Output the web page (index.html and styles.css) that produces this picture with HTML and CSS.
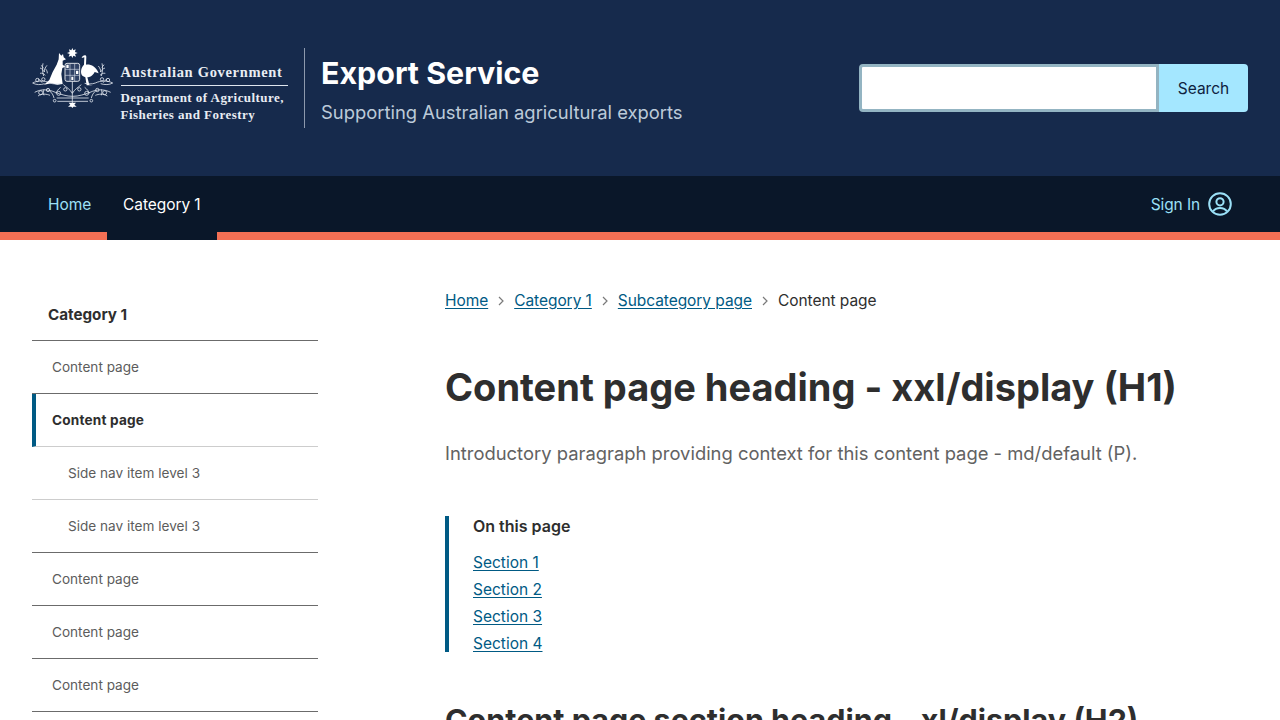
FILE: index.html
```html
<!DOCTYPE html>
<html lang="en">
<head>
<meta charset="utf-8">
<title>Export Service</title>
<link rel="stylesheet" href="styles.css">
</head>
<body>
<header class="masthead">
  <div class="brand">
    <div class="logo">
      <svg class="crest" width="90" height="68" viewBox="0 0 270 204" aria-hidden="true">
        <path class="fill" d="M133 12l3 7 7-3-2 8 8 3-8 3 3 8-8-3-3 7-3-7-8 3 3-8-8-3 8-3-2-8 7 3z"/>
        <path class="fill" d="M93 27l7 8 5-5 2 10 7 6-10 4v12l8 6-9 4-3 18 4 30-16 2-18-4-22 4 16-14 10-24 12-22 6-16z"/>
        <path class="fill" d="M161 42c2-8 13-11 14-4l-1 24c12-2 30 4 38 26l-12-4c-6 12-16 16-22 16l6 22 10 2h-18l-4-24-8-4c-8-8-6-24 4-34l1-22z"/>
        <rect class="shield" x="111" y="58" width="44" height="54" rx="6"/>
        <path class="grid" d="M111 76h44M111 94h44M126 58v54M140 58v54"/>
        <path class="fill" d="M115 62h7v10h-7zM144 80h7v10h-7zM130 98h6v10h-6z"/>
        <g class="thin">
          <path d="M45 58c-3 12-2 26 2 38M36 72c6 2 12 6 14 12M57 64c-5 6-8 12-9 20M36 88c6-2 12 2 16 6M40 64c2 4 4 6 7 8M52 74c4 4 6 8 6 14"/>
          <path d="M222 58c3 12 2 26-2 38M231 72c-6 2-12 6-14 12M211 66c5 6 7 12 8 18M232 88c-6-2-12 2-16 6M228 62c-2 4-4 6-7 8"/>
          <path d="M14 117c14-8 36-8 52 0 10 4 24 3 34 1M254 117c-14-8-36-8-52 0-10 4-22 3-32 1"/>
          <path d="M14 117c10 6 24 6 36 2M254 117c-10 6-24 6-36 2M30 104c6 4 10 8 12 12M238 104c-6 4-10 8-12 12"/>
          <path d="M20 145c18-10 40-10 62 0 16 6 34 12 52 12s36-6 52-12c22-10 42-10 62 0"/>
          <path d="M30 156c12-8 26-6 36-2M238 156c-12-8-26-6-36-2M64 140c8 6 12 14 14 22M204 140c-8 6-12 14-14 22M48 136c-2 6-2 12 0 18M220 136c2 6 2 12 0 18"/>
          <path d="M133 112v66M106 122c10 8 20 14 27 26M160 122c-10 8-20 14-27 26M86 162h96M88 172h92M98 130c-8 6-12 12-14 18M170 130c8 6 12 12 14 18"/>
          <circle cx="28" cy="108" r="5"/><circle cx="46" cy="106" r="5"/><circle cx="222" cy="106" r="5"/><circle cx="240" cy="108" r="5"/>
          <circle cx="38" cy="146" r="6"/><circle cx="60" cy="138" r="5"/><circle cx="208" cy="138" r="5"/><circle cx="230" cy="146" r="6"/>
          <circle cx="92" cy="148" r="6"/><circle cx="176" cy="148" r="6"/><circle cx="112" cy="136" r="5"/><circle cx="154" cy="136" r="5"/>
          <circle cx="80" cy="170" r="4"/><circle cx="190" cy="170" r="4"/>
        </g>
        <path class="fill" d="M122 176h22l-5 6 7 6h-10l-3 4-3-4h-10l7-6z"/>
      </svg>
      <div class="logo-text">
        <div class="gov">Australian Government</div>
        <div class="dept">Department of Agriculture,<br>Fisheries and Forestry</div>
      </div>
    </div>
    <div class="title-block">
      <div class="site-title">Export Service</div>
      <div class="site-sub">Supporting Australian agricultural exports</div>
    </div>
  </div>
  <form class="search">
    <input class="search-input" type="text" aria-label="Search">
    <button class="search-btn" type="button">Search</button>
  </form>
</header>
<nav class="topnav">
  <ul class="topnav-list">
    <li><a class="topnav-link" href="#">Home</a></li>
    <li><a class="topnav-link is-active" href="#">Category 1</a></li>
  </ul>
  <a class="signin" href="#">Sign In
    <svg width="24" height="24" viewBox="0 0 24 24" fill="none" stroke="currentColor" stroke-width="2" aria-hidden="true">
      <circle cx="12" cy="12" r="10.800"/>
      <circle cx="12" cy="9.800" r="3.600"/>
      <path d="M5 19.400c1.500-2.300 4-3.500 7-3.500s5.500 1.200 7 3.500"/>
    </svg>
  </a>
</nav>
<div class="layout">
  <aside class="sidenav">
    <div class="sidenav-title">Category 1</div>
    <a class="side-item" href="#">Content page</a>
    <a class="side-item is-current" href="#">Content page</a>
    <a class="side-item level3" href="#">Side nav item level 3</a>
    <a class="side-item level3 last" href="#">Side nav item level 3</a>
    <a class="side-item" href="#">Content page</a>
    <a class="side-item" href="#">Content page</a>
    <a class="side-item" href="#">Content page</a>
  </aside>
  <main class="content">
    <ol class="crumbs">
      <li><a href="#">Home</a></li>
      <li class="sep"><svg width="8" height="10" viewBox="0 0 8 10" fill="none" stroke="currentColor" stroke-width="1.200"><path d="M2 1l4 4-4 4"/></svg></li>
      <li><a href="#">Category 1</a></li>
      <li class="sep"><svg width="8" height="10" viewBox="0 0 8 10" fill="none" stroke="currentColor" stroke-width="1.200"><path d="M2 1l4 4-4 4"/></svg></li>
      <li><a href="#">Subcategory page</a></li>
      <li class="sep"><svg width="8" height="10" viewBox="0 0 8 10" fill="none" stroke="currentColor" stroke-width="1.200"><path d="M2 1l4 4-4 4"/></svg></li>
      <li>Content page</li>
    </ol>
    <h1 class="h1">Content page heading - xxl/display (H1)</h1>
    <p class="intro">Introductory paragraph providing context for this content page - md/default (P).</p>
    <section class="toc">
      <div class="toc-title">On this page</div>
      <ul class="toc-list">
        <li><a href="#">Section 1</a></li>
        <li><a href="#">Section 2</a></li>
        <li><a href="#">Section 3</a></li>
        <li><a href="#">Section 4</a></li>
      </ul>
    </section>
    <h2 class="h2">Content page section heading - xl/display (H2)</h2>
  </main>
</div>
</body>
</html>
```
FILE: styles.css
```css
* { box-sizing: border-box; }
html, body { margin: 0; height: 720px; overflow: hidden; background: #fff; }
body { font-family: Inter, "Liberation Sans", sans-serif; font-size: 15.500px; color: #2e2e2e; }
a { color: inherit; }
ul, ol { list-style: none; margin: 0; padding: 0; }

.masthead { height: 176px; background: #162a4c; display: flex; align-items: center; justify-content: space-between; padding: 0 32px; }
.brand { display: flex; align-items: center; }
.logo { display: flex; align-items: center; width: 273px; height: 80px; border-right: 1px solid #8d99ad; }
.crest { flex: none; align-self: flex-start; margin: -4px 2.500px 0 -4px; }
.crest .fill { fill: #fff; }
.crest .shield { fill: #2f4164; stroke: #fff; stroke-width: 2.500; }
.crest .grid { fill: none; stroke: #c9d2df; stroke-width: 2; }
.crest .thin, .crest .thin * { fill: none; stroke: #e6ebf2; stroke-width: 2.400; }
.logo-text { width: 167px; font-family: "Liberation Serif", serif; font-weight: 700; color: #e9edf3; margin-top: 10px; }
.gov { font-size: 14.500px; line-height: 18px; letter-spacing: .68px; padding-bottom: 4px; border-bottom: 1px solid #dfe5ee; white-space: nowrap; }
.dept { font-size: 13px; line-height: 17px; letter-spacing: .45px; margin-top: 3.500px; white-space: nowrap; }
.title-block { margin-left: 16px; margin-top: 3px; }
.site-title { font-size: 30.400px; line-height: 40px; font-weight: 700; color: #fff; }
.site-sub { font-size: 18.400px; line-height: 28px; color: #bccad9; margin-top: 5px; }

.search { display: flex; width: 389px; height: 48px; }
.search-input { flex: 1; min-width: 0; height: 48px; border: 3px solid #93b4c2; border-radius: 4px 0 0 4px; background: #fff; outline: 0; }
.search-btn { width: 89px; height: 48px; border: 0; border-radius: 0 4px 4px 0; background: #a4e7ff; color: #0e2240; font: 15.500px Inter, sans-serif; }

.topnav { height: 64px; background: #0a1729; border-bottom: 8px solid #f36f54; display: flex; justify-content: space-between; padding: 0 48px 0 32px; }
.topnav-list { display: flex; }
.topnav-link { display: block; height: 64px; padding: 0 16px; line-height: 58px; letter-spacing: -.08px; text-decoration: none; color: #9be0f7; white-space: nowrap; }
.topnav-link.is-active { color: #fff; background: #0a1729; }
.signin { display: flex; align-items: center; gap: 8px; height: 56px; letter-spacing: -.1px; text-decoration: none; color: #9be0f7; }

.layout { display: flex; padding: 48px 32px 0; }
.sidenav { width: 286px; flex: none; }
.sidenav-title { height: 53px; padding: 0 16px; display: flex; align-items: center; font-weight: 700; font-size: 15.200px; color: #2e2e2e; border-bottom: 1px solid #6b6b6b; }
.side-item { display: flex; align-items: center; height: 53px; padding: 0 0 0 20px; text-decoration: none; font-size: 13.600px; color: #5c5c5c; border-bottom: 1px solid #6b6b6b; }
.side-item.is-current { font-weight: 700; letter-spacing: .2px; color: #2e2e2e; border-left: 4px solid #005a84; padding-left: 16px; border-bottom-color: #cdcdcd; }
.side-item.level3 { padding-left: 36px; border-bottom-color: #cdcdcd; }
.side-item.level3.last { border-bottom-color: #6b6b6b; }

.content { margin-left: 127px; flex: 1; min-width: 0; }
.content a { color: #005a84; text-underline-offset: 2px; }
.crumbs { display: flex; align-items: center; height: 26px; line-height: 26px; letter-spacing: -.06px; }
.crumbs .sep { width: 26px; display: flex; justify-content: center; color: #7a7a7a; }
.h1 { margin: 48px 0 0; font-size: 38px; line-height: 50px; font-weight: 700; color: #2e2e2e; white-space: nowrap; }
.intro { margin: 27px 0 0; font-size: 18.400px; line-height: 28px; color: #626262; white-space: nowrap; }
.toc { margin-top: 49px; border-left: 4px solid #005a84; padding-left: 24px; height: 136px; }
.toc-title { font-weight: 600; line-height: 20px; font-size: 16px; }
.toc-list { margin-top: 13px; }
.toc-list li { line-height: 27px; }
.h2 { margin: 48px 0 0; font-size: 30.500px; line-height: 40px; font-weight: 700; color: #2e2e2e; white-space: nowrap; }
```
